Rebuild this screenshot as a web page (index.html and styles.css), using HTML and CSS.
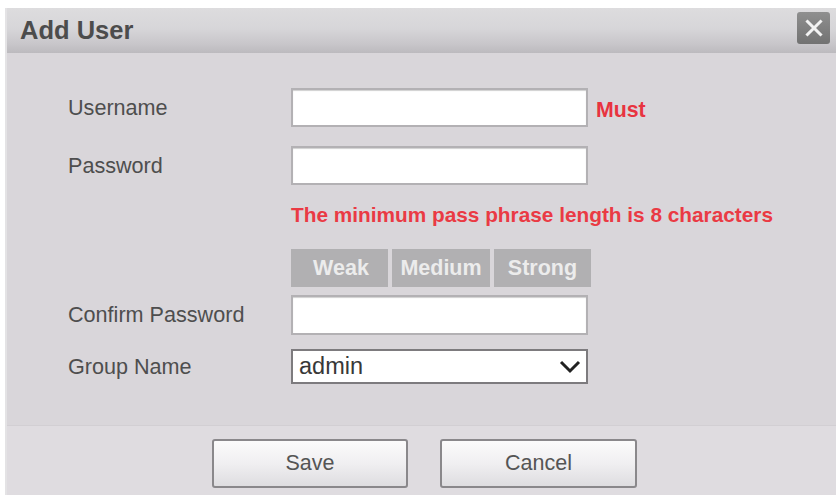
FILE: index.html
```html
<!DOCTYPE html>
<html>
<head>
<meta charset="utf-8">
<link rel="stylesheet" href="styles.css">
</head>
<body>
<div class="dialog">
  <div class="titlebar">
    <div class="title">Add User</div>
    <div class="close">
      <svg width="20" height="20" viewBox="0 0 20 20"><path d="M3.5 3.5 L16.5 16.5 M16.5 3.5 L3.5 16.5" stroke="#f2f2f2" stroke-width="3" stroke-linecap="square" fill="none"/></svg>
    </div>
  </div>
  <div class="content">
    <div class="row r-user">
      <div class="label">Username</div>
      <div class="input"></div>
      <div class="must">Must</div>
    </div>
    <div class="row r-pass">
      <div class="label">Password</div>
      <div class="input"></div>
    </div>
    <div class="row r-err">
      <div class="label"></div>
      <div class="err">The minimum pass phrase length is 8 characters</div>
    </div>
    <div class="row r-strength">
      <div class="label"></div>
      <div class="strength">
        <div class="seg seg-weak">Weak</div>
        <div class="seg seg-med">Medium</div>
        <div class="seg seg-strong">Strong</div>
      </div>
    </div>
    <div class="row r-confirm">
      <div class="label">Confirm Password</div>
      <div class="input"></div>
    </div>
    <div class="row r-group">
      <div class="label">Group Name</div>
      <div class="select">
        <span class="sel-text">admin</span>
        <svg class="chev" width="22" height="14" viewBox="0 0 22 14"><path d="M2 2 L11 11 L20 2" stroke="#222" stroke-width="3" fill="none"/></svg>
      </div>
    </div>
  </div>
  <div class="footer">
    <div class="btn">Save</div>
    <div class="btn btn-cancel">Cancel</div>
  </div>
</div>
</body>
</html>
```

FILE: styles.css
```css
html, body {
  margin: 0;
  padding: 0;
  background: #ffffff;
  overflow: hidden;
}
body {
  font-family: "Liberation Sans", Arial, sans-serif;
  height: 495px;
}
.dialog {
  margin: 8px 0 0 7px;
  width: 829px;
  height: 500px;
  background: #d9d6da;
  display: flex;
  flex-direction: column;
  box-shadow: -2px 0 0 #e4e3e5;
}
.titlebar {
  height: 45px;
  box-sizing: border-box;
  display: flex;
  justify-content: space-between;
  align-items: center;
  padding: 0 6px 0 13px;
  background: linear-gradient(to bottom, #dddcde 0%, #d7d6d9 45%, #c8c6ca 80%, #bcbabe 100%);
}
.title {
  font-size: 25.5px;
  font-weight: bold;
  color: #4c4c4c;
}
.close {
  align-self: flex-start;
  margin-top: 4px;
  width: 33px;
  height: 32px;
  border-radius: 3px;
  background: linear-gradient(to bottom, #8f8f8f, #727272);
  display: flex;
  align-items: center;
  justify-content: center;
}
.content {
  height: 372px;
  box-sizing: border-box;
  padding: 35px 0 0 61px;
  display: flex;
  flex-direction: column;
}
.row {
  display: flex;
  align-items: center;
}
.label {
  width: 223px;
  flex: none;
  font-size: 21.6px;
  color: #4e4e4e;
}
.input {
  width: 297px;
  height: 39px;
  box-sizing: border-box;
  background: #ffffff;
  border: 2px solid #b3b1b4;
  box-shadow: inset 0 1px 1px #d0d0d0;
}
.must {
  margin-left: 8px;
  font-size: 21.3px;
  font-weight: bold;
  color: #e8333f;
  margin-top: 6px;
}
.r-pass { margin-top: 19px; }
.r-err { margin-top: 19px; height: 22px; }
.err {
  font-size: 20.8px;
  font-weight: bold;
  color: #ea3a44;
  white-space: nowrap;
}
.r-strength { margin-top: 23px; }
.strength {
  display: flex;
  gap: 4px;
  height: 38px;
  width: 300px;
}
.seg {
  background: #b1b0b2;
  color: #ececec;
  font-size: 21.5px;
  font-weight: bold;
  display: flex;
  align-items: center;
  justify-content: center;
}
.seg-weak { width: 97px; padding-left: 3px; box-sizing: border-box; }
.seg-med { width: 98px; }
.seg-strong { width: 97px; }
.r-confirm { margin-top: 8px; }
.r-confirm .input { height: 40px; }
.r-group { margin-top: 14px; }
.select {
  width: 297px;
  height: 35px;
  box-sizing: border-box;
  background: #ffffff;
  border: 2px solid #7d7b7e;
  display: flex;
  align-items: center;
  justify-content: space-between;
  padding: 0 5px 0 6px;
}
.sel-text {
  font-size: 23.5px;
  color: #383838;
}
.chev { margin-top: 1px; }
.footer {
  flex: 1;
  background: #dfdce0;
  border-top: 1px solid #d2cfd3;
  display: flex;
  justify-content: center;
  align-items: flex-start;
  gap: 32px;
  padding-top: 13px;
  padding-left: 6px;
}
.btn {
  width: 196px;
  height: 49px;
  box-sizing: border-box;
  border: 2px solid #8a888b;
  border-radius: 3px;
  background: linear-gradient(to bottom, #fbfbfb 0%, #f0eff1 50%, #dedde0 100%);
  display: flex;
  align-items: center;
  justify-content: center;
  font-size: 21.5px;
  color: #555555;
}
.btn-cancel { width: 197px; }
```
